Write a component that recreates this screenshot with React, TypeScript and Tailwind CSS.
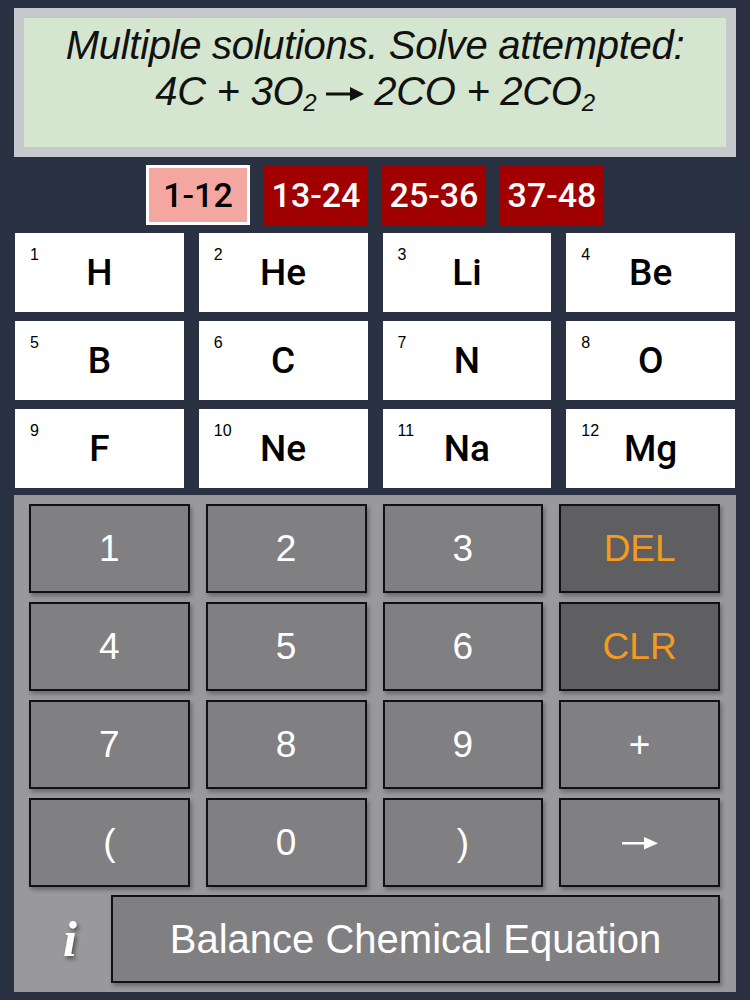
import React from "react";

const elements = [
  [1, "H"], [2, "He"], [3, "Li"], [4, "Be"],
  [5, "B"], [6, "C"], [7, "N"], [8, "O"],
  [9, "F"], [10, "Ne"], [11, "Na"], [12, "Mg"],
] as const;

const keys: { label: string; dark?: boolean; arrow?: boolean }[] = [
  { label: "1" }, { label: "2" }, { label: "3" }, { label: "DEL", dark: true },
  { label: "4" }, { label: "5" }, { label: "6" }, { label: "CLR", dark: true },
  { label: "7" }, { label: "8" }, { label: "9" }, { label: "+" },
  { label: "(" }, { label: "0" }, { label: ")" }, { label: "→", arrow: true },
];

const medium = { fontFamily: 'Roboto, "Liberation Sans", sans-serif' };

export default function App() {
  return (
    <div
      className="w-[750px] h-[1000px] bg-[#2a3142] flex flex-col px-[14px] pt-[8px]"
      style={{ fontFamily: '"Liberation Sans", Arial, sans-serif' }}
    >
      {/* Display */}
      <div className="h-[149px] bg-[#c6c8cb] p-[10px]">
        <div className="h-full bg-[#d4e5d0] flex flex-col items-center pt-[4px] text-[#111] italic">
          <div className="text-[40px] leading-[46px] tracking-[-0.3px]">Multiple solutions. Solve attempted:</div>
          <div className="text-[40px] leading-[46px] tracking-[-0.3px] flex items-baseline">
            <span>4C + 3O</span>
            <span className="text-[24px] relative top-[6px]">2</span>
            <span className="mx-[10px] self-center">
              <svg width="38" height="16" viewBox="0 0 38 16">
                <rect x="0" y="6.5" width="26" height="3" fill="#111" />
                <polygon points="24,1 38,8 24,15" fill="#111" />
              </svg>
            </span>
            <span>2CO + 2CO</span>
            <span className="text-[24px] relative top-[6px]">2</span>
          </div>
        </div>
      </div>

      {/* Tabs */}
      <div className="mt-[8px] h-[60px] flex justify-center gap-[14px]" style={medium}>
        <div className="w-[104px] h-[60px] bg-[#f4a6a0] border-[3px] border-white flex items-center justify-center text-[34px] font-medium text-black">
          1-12
        </div>
        {["13-24", "25-36", "37-48"].map((t) => (
          <div
            key={t}
            className="w-[104px] h-[59px] mt-[1px] bg-[#a00000] flex items-center justify-center text-[34px] font-medium text-white"
          >
            {t}
          </div>
        ))}
      </div>

      {/* Elements */}
      <div className="mt-[8px] px-[1px] grid grid-cols-4 gap-x-[15px] gap-y-[9px]">
        {elements.map(([n, s]) => (
          <div key={n} className="relative h-[79px] bg-white flex items-center justify-center">
            <span className="absolute left-[15px] top-[10px] text-[16px] text-black">{n}</span>
            <span className="text-[37px] font-medium text-black" style={medium}>{s}</span>
          </div>
        ))}
      </div>

      {/* Keypad */}
      <div className="mt-[7px] h-[497px] bg-[#99999b] pl-[15px] pr-[16px] pt-[9px] flex flex-col">
        <div className="grid grid-cols-4 gap-x-[16px] gap-y-[9px]">
          {keys.map((k) => (
            <div
              key={k.label}
              className={`h-[89px] border-2 border-[#111] flex items-center justify-center text-[37px] shadow-[2px_3px_4px_rgba(0,0,0,0.3)] ${
                k.dark ? "bg-[#5f5e61] text-[#f39a1f]" : "bg-[#807f82] text-white"
              }`}
            >
              {k.arrow ? (
                <svg width="36" height="16" viewBox="0 0 36 16">
                  <rect x="0" y="7" width="24" height="2.5" fill="white" />
                  <polygon points="22,2 36,8.2 22,14.5" fill="white" />
                </svg>
              ) : (
                k.label
              )}
            </div>
          ))}
        </div>
        <div className="mt-[8px] flex h-[88px]">
          <div className="w-[82px] flex items-center justify-center">
            <span
              className="text-white italic font-bold text-[50px] leading-none drop-shadow-[2px_3px_2px_rgba(0,0,0,0.45)]"
              style={{ fontFamily: '"Liberation Serif", "Times New Roman", serif' }}
            >
              i
            </span>
          </div>
          <div className="flex-1 border-2 border-[#111] bg-[#807f82] flex items-center justify-center text-white text-[40px] shadow-[2px_3px_4px_rgba(0,0,0,0.3)]">
            Balance Chemical Equation
          </div>
        </div>
      </div>
    </div>
  );
}
